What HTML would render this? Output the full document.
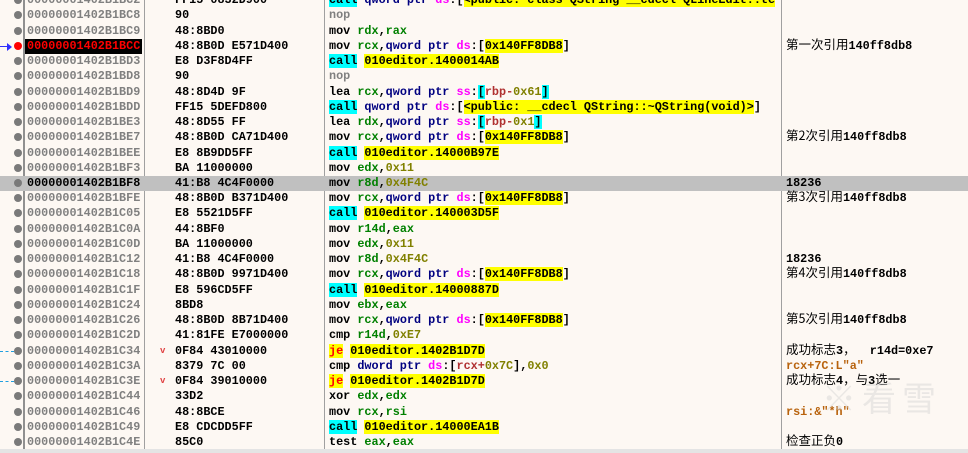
<!DOCTYPE html>
<html><head><meta charset="utf-8"><style>
*{margin:0;padding:0;box-sizing:border-box}
body{width:968px;height:453px;overflow:hidden;background:#fdf8f3;font-family:"Liberation Mono",monospace;font-size:11.8px;font-weight:bold;position:relative}
.vl{position:absolute;top:0;height:449px;width:1px;background:#a0a0a0}
.r{position:absolute;left:0;width:968px;height:15.24px;line-height:15.24px;white-space:pre}
.hl{background:#c0c0c0}
.d{position:absolute;left:14px;top:3px;width:8px;height:8px;border-radius:50%;background:#7a7a7a}
.a{position:absolute;left:27px;color:#808080}
.b{position:absolute;left:175px;color:#000}
.i{position:absolute;left:329px;color:#000}
.c{position:absolute;left:786px;top:0;height:15.24px;line-height:15.24px;color:#000;font-family:"Liberation Mono","Noto Sans CJK SC",monospace}
.c .z{font-weight:normal;font-family:"Noto Sans CJK SC",sans-serif;font-size:12.5px;line-height:0}
.g{color:#008000}.n{color:#000080}.m{color:#ff00ff}.o{color:#808000}.rb{color:#b03030}.gr{color:#808080}
.y{background:#ffff00}.cy{background:#00ffff}.je{background:#ffff00;color:#ff0000}
.br{color:#b8620c}
</style></head><body>
<div class="vl" style="left:23px;width:2px;background:#909090"></div>
<div class="vl" style="left:144px"></div>
<div class="vl" style="left:324px"></div>
<div class="vl" style="left:781px"></div>
<div style="position:absolute;left:0;top:449px;width:968px;height:4px;background:#e4e4e4"></div>

<div class="r" style="top:-6.9px"><i class="d"></i><span class="a">00000001402B1BC2</span><span class="b">FF15 0832D900</span><span class="i"><span class="cy">call</span> <span class="n">qword ptr</span> <span class="m">ds</span>:[<span class="y">&lt;public: class QString __cdecl QLineEdit::te</span></span></div>
<div class="r" style="top:8.34px"><i class="d"></i><span class="a">00000001402B1BC8</span><span class="b">90</span><span class="i gr">nop</span></div>
<div class="r" style="top:23.58px"><i class="d"></i><span class="a">00000001402B1BC9</span><span class="b">48:8BD0</span><span class="i">mov <span class="g">rdx</span>,<span class="g">rax</span></span></div>
<div class="r" style="top:38.82px"><div style="position:absolute;left:0;top:7px;width:9px;height:1.5px;background:#3030ff"></div><div style="position:absolute;left:7px;top:4px;width:0;height:0;border-left:5px solid #3030ff;border-top:4px solid transparent;border-bottom:4px solid transparent"></div><i class="d" style="background:#ff0000"></i><span class="a" style="left:25px;background:#000;color:#ff0000;padding:0 2px">00000001402B1BCC</span><span class="b">48:8B0D E571D400</span><span class="i">mov <span class="g">rcx</span>,<span class="n">qword ptr</span> <span class="m">ds</span>:[<span class="y">0x140FF8DB8</span>]</span><span class="c"><span class="z">第一次引用</span>140ff8db8</span></div>
<div class="r" style="top:54.06px"><i class="d"></i><span class="a">00000001402B1BD3</span><span class="b">E8 D3F8D4FF</span><span class="i"><span class="cy">call</span> <span class="y">010editor.1400014AB</span></span></div>
<div class="r" style="top:69.3px"><i class="d"></i><span class="a">00000001402B1BD8</span><span class="b">90</span><span class="i gr">nop</span></div>
<div class="r" style="top:84.54px"><i class="d"></i><span class="a">00000001402B1BD9</span><span class="b">48:8D4D 9F</span><span class="i">lea <span class="g">rcx</span>,<span class="n">qword ptr</span> <span class="m">ss</span>:<span class="cy">[</span><span class="rb">rbp-</span><span class="o">0x61</span><span class="cy">]</span></span></div>
<div class="r" style="top:99.78px"><i class="d"></i><span class="a">00000001402B1BDD</span><span class="b">FF15 5DEFD800</span><span class="i"><span class="cy">call</span> <span class="n">qword ptr</span> <span class="m">ds</span>:[<span class="y">&lt;public: __cdecl QString::~QString(void)&gt;</span>]</span></div>
<div class="r" style="top:115.02px"><i class="d"></i><span class="a">00000001402B1BE3</span><span class="b">48:8D55 FF</span><span class="i">lea <span class="g">rdx</span>,<span class="n">qword ptr</span> <span class="m">ss</span>:<span class="cy">[</span><span class="rb">rbp-</span><span class="o">0x1</span><span class="cy">]</span></span></div>
<div class="r" style="top:130.26px"><i class="d"></i><span class="a">00000001402B1BE7</span><span class="b">48:8B0D CA71D400</span><span class="i">mov <span class="g">rcx</span>,<span class="n">qword ptr</span> <span class="m">ds</span>:[<span class="y">0x140FF8DB8</span>]</span><span class="c"><span class="z">第2次引用</span>140ff8db8</span></div>
<div class="r" style="top:145.5px"><i class="d"></i><span class="a">00000001402B1BEE</span><span class="b">E8 8B9DD5FF</span><span class="i"><span class="cy">call</span> <span class="y">010editor.14000B97E</span></span></div>
<div class="r" style="top:160.74px"><i class="d"></i><span class="a">00000001402B1BF3</span><span class="b">BA 11000000</span><span class="i">mov <span class="g">edx</span>,<span class="o">0x11</span></span></div>
<div class="r hl" style="top:175.98px"><i class="d"></i><span class="a" style="color:#000">00000001402B1BF8</span><span class="b">41:B8 4C4F0000</span><span class="i">mov <span class="g">r8d</span>,<span class="o">0x4F4C</span></span><span class="c">18236</span></div>
<div class="r" style="top:191.22px"><i class="d"></i><span class="a">00000001402B1BFE</span><span class="b">48:8B0D B371D400</span><span class="i">mov <span class="g">rcx</span>,<span class="n">qword ptr</span> <span class="m">ds</span>:[<span class="y">0x140FF8DB8</span>]</span><span class="c"><span class="z">第3次引用</span>140ff8db8</span></div>
<div class="r" style="top:206.46px"><i class="d"></i><span class="a">00000001402B1C05</span><span class="b">E8 5521D5FF</span><span class="i"><span class="cy">call</span> <span class="y">010editor.140003D5F</span></span></div>
<div class="r" style="top:221.7px"><i class="d"></i><span class="a">00000001402B1C0A</span><span class="b">44:8BF0</span><span class="i">mov <span class="g">r14d</span>,<span class="g">eax</span></span></div>
<div class="r" style="top:236.94px"><i class="d"></i><span class="a">00000001402B1C0D</span><span class="b">BA 11000000</span><span class="i">mov <span class="g">edx</span>,<span class="o">0x11</span></span></div>
<div class="r" style="top:252.18px"><i class="d"></i><span class="a">00000001402B1C12</span><span class="b">41:B8 4C4F0000</span><span class="i">mov <span class="g">r8d</span>,<span class="o">0x4F4C</span></span><span class="c">18236</span></div>
<div class="r" style="top:267.42px"><i class="d"></i><span class="a">00000001402B1C18</span><span class="b">48:8B0D 9971D400</span><span class="i">mov <span class="g">rcx</span>,<span class="n">qword ptr</span> <span class="m">ds</span>:[<span class="y">0x140FF8DB8</span>]</span><span class="c"><span class="z">第4次引用</span>140ff8db8</span></div>
<div class="r" style="top:282.66px"><i class="d"></i><span class="a">00000001402B1C1F</span><span class="b">E8 596CD5FF</span><span class="i"><span class="cy">call</span> <span class="y">010editor.14000887D</span></span></div>
<div class="r" style="top:297.9px"><i class="d"></i><span class="a">00000001402B1C24</span><span class="b">8BD8</span><span class="i">mov <span class="g">ebx</span>,<span class="g">eax</span></span></div>
<div class="r" style="top:313.14px"><i class="d"></i><span class="a">00000001402B1C26</span><span class="b">48:8B0D 8B71D400</span><span class="i">mov <span class="g">rcx</span>,<span class="n">qword ptr</span> <span class="m">ds</span>:[<span class="y">0x140FF8DB8</span>]</span><span class="c"><span class="z">第5次引用</span>140ff8db8</span></div>
<div class="r" style="top:328.38px"><i class="d"></i><span class="a">00000001402B1C2D</span><span class="b">41:81FE E7000000</span><span class="i">cmp <span class="g">r14d</span>,<span class="o">0xE7</span></span></div>
<div class="r" style="top:343.62px"><div style="position:absolute;left:0;top:7px;width:14px;border-top:1px dashed #20a0e0"></div><i class="d"></i><span class="a">00000001402B1C34</span><span style="position:absolute;left:160px;color:#e04040;font-size:9px">v</span><span class="b">0F84 43010000</span><span class="i"><span class="je">je</span> <span class="y">010editor.1402B1D7D</span></span><span class="c"><span class="z">成功标志</span>3<span class="z">，</span>  r14d=0xe7</span></div>
<div class="r" style="top:358.86px"><i class="d"></i><span class="a">00000001402B1C3A</span><span class="b">8379 7C 00</span><span class="i">cmp <span class="n">dword ptr</span> <span class="m">ds</span>:[<span class="rb">rcx+</span><span class="o">0x7C</span>],<span class="o">0x0</span></span><span class="c br">rcx+7C:L"a"</span></div>
<div class="r" style="top:374.1px"><div style="position:absolute;left:0;top:7px;width:14px;border-top:1px dashed #20a0e0"></div><i class="d"></i><span class="a">00000001402B1C3E</span><span style="position:absolute;left:160px;color:#e04040;font-size:9px">v</span><span class="b">0F84 39010000</span><span class="i"><span class="je">je</span> <span class="y">010editor.1402B1D7D</span></span><span class="c"><span class="z">成功标志</span>4<span class="z">，与</span>3<span class="z">选一</span></span></div>
<div class="r" style="top:389.34px"><i class="d"></i><span class="a">00000001402B1C44</span><span class="b">33D2</span><span class="i">xor <span class="g">edx</span>,<span class="g">edx</span></span></div>
<div class="r" style="top:404.58px"><i class="d"></i><span class="a">00000001402B1C46</span><span class="b">48:8BCE</span><span class="i">mov <span class="g">rcx</span>,<span class="g">rsi</span></span><span class="c br">rsi:&amp;"*h"</span></div>
<div class="r" style="top:419.82px"><i class="d"></i><span class="a">00000001402B1C49</span><span class="b">E8 CDCDD5FF</span><span class="i"><span class="cy">call</span> <span class="y">010editor.14000EA1B</span></span></div>
<div class="r" style="top:435.06px"><i class="d"></i><span class="a">00000001402B1C4E</span><span class="b">85C0</span><span class="i">test <span class="g">eax</span>,<span class="g">eax</span></span><span class="c"><span class="z">检查正负</span>0</span></div>
<div style="position:absolute;left:822px;top:372px;color:rgba(210,210,210,0.45);font-family:'Noto Sans CJK SC',sans-serif;font-size:34px;font-weight:normal;letter-spacing:6px">※看雪</div>
</body></html>
